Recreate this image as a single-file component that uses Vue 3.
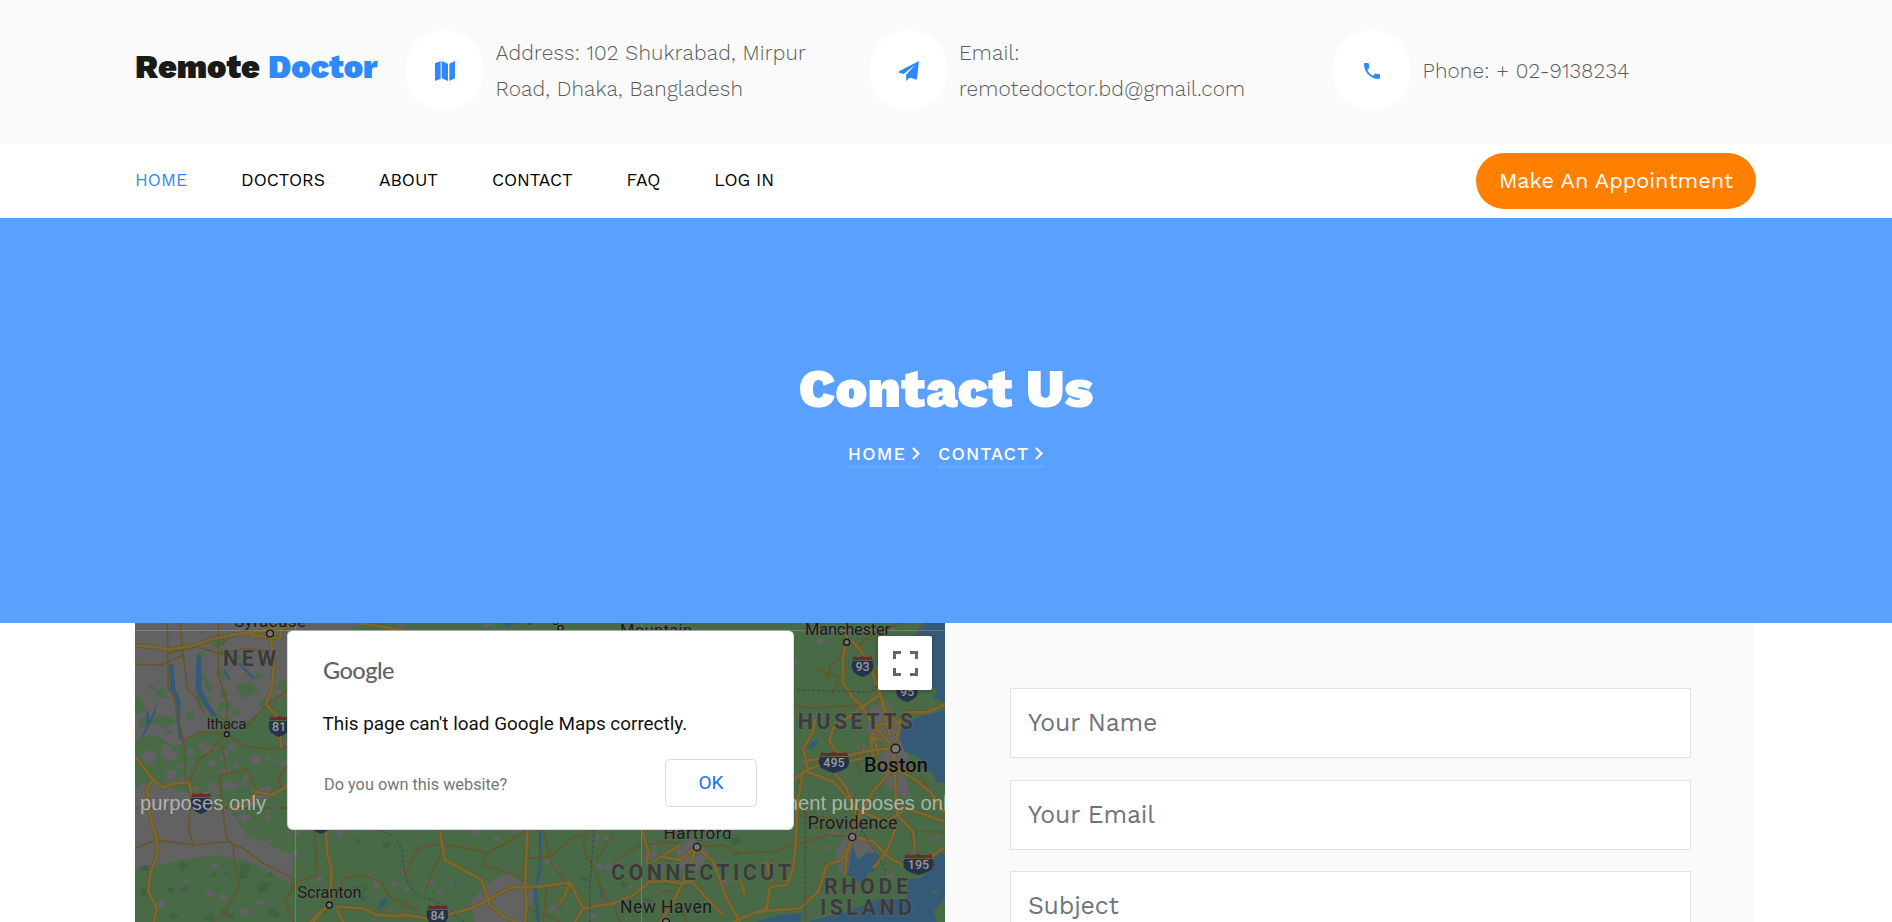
<script setup>
const contacts = [
  { icon: 'map', lines: ['Address: 102 Shukrabad, Mirpur', 'Road, Dhaka, Bangladesh'] },
  { icon: 'plane', lines: ['Email:', 'remotedoctor.bd@gmail.com'] },
  { icon: 'phone', lines: ['Phone: + 02-9138234'] },
]
const links = ['HOME', 'DOCTORS', 'ABOUT', 'CONTACT', 'FAQ', 'LOG IN']
const crumbs = ['HOME', 'CONTACT']
const fields = ['Your Name', 'Your Email', 'Subject']

// Deterministic land-cover patches for the map terrain
let seed = 11
const rnd = () => {
  seed = (seed * 16807) % 2147483647
  return seed / 2147483647
}
function patches(n, x, y, w, h, size) {
  let d = ''
  for (let i = 0; i < n; i++) {
    const cx = x + rnd() * w
    const cy = y + rnd() * h
    const r = size * (0.5 + rnd())
    const a0 = rnd() * 6.28
    const k = 3 + Math.floor(rnd() * 3)
    for (let j = 0; j < k; j++) {
      const a = a0 + (j * 6.28) / k
      const q = r * (0.4 + rnd() * 0.8)
      d += (j ? 'L' : 'M') + (cx + Math.cos(a) * q).toFixed(1) + ' ' + (cy + Math.sin(a) * q * 0.8).toFixed(1)
    }
    d += 'Z'
  }
  return d
}
const greenPatches = patches(34, 0, 55, 160, 75, 8) + patches(10, 60, 10, 100, 50, 5)
const greyPatches =
  patches(85, 0, 120, 165, 75, 6) + patches(22, 0, 200, 165, 95, 6) +
  patches(50, 165, 205, 370, 94, 5) + patches(65, 530, 0, 280, 260, 5) + patches(15, 165, 0, 370, 12, 6)
const darkPatches = patches(20, 10, 235, 140, 60, 6) + patches(10, 180, 215, 340, 80, 5) + patches(12, 545, 20, 100, 240, 5)

const shields = [
  { x: 144, y: 103, n: '81', w: 21 },
  { x: 66, y: 180, n: '', w: 21 },
  { x: 186, y: 200, n: '', w: 21 },
  { x: 302.5, y: 292, n: '84', w: 22 },
  { x: 727.5, y: 43, n: '93', w: 22 },
  { x: 772, y: 68, n: '95', w: 22 },
  { x: 699, y: 139, n: '495', w: 31 },
  { x: 783.5, y: 241, n: '195', w: 31 },
]
const major = {
  a: 'M15 91L60 95L120 103L180 94L240 75L300 60L380 50L480 35M420 24L425 90L432 150L425 220L408 270L440 300L455 400M15 425L70 495L100 518L135 505L178 503L185 540M70 495L50 520L60 600L80 670L82 720L62 770L55 830L80 880L72 921M290 580L345 575L380 530L425 540L480 510M588 645L592 720L605 760L600 860L550 921M605 870L570 890L540 921M620 880L640 921M620 875L700 880L740 900L840 905M500 24L455 40L450 70L410 65L360 60M690 24L840 50',
  b: 'M120 650L135 735L245 795L270 870L310 905L350 921M382 645L376 800L380 870L375 921M0 897L80 910L160 895L220 878L330 818L420 815L510 803L550 880L640 865L700 840L750 800L840 800M725 645L745 710L740 740L770 780M840 690L760 740M550 880L525 921M510 803L490 850L475 870',
  c: 'M560 24V80L548 130L550 205L580 250L605 272L640 330L700 395M575 75L605 110L640 180L660 240L680 290L720 330L705 390M650 150L658 220L672 290L690 360M855 268L800 292L740 292L715 325M720 320L650 330L632 370L640 430L690 470L760 460M400 495L440 465L500 440L560 422L640 405L705 400M660 240L600 280L520 340L508 380L530 410M445 465L430 400L460 350L465 310M430 470L412 560L408 680L400 760L380 810L330 815M430 440L480 430L520 465L560 520L590 600L578 665L560 720L555 780M690 470L640 530L600 600L578 665M703 400V470L712 600L760 650L765 710M703 460L760 490L810 530L855 595M440 470L520 500L600 590L680 620L740 580L855 620M578 665L640 680L690 730L740 755L800 735L855 695M710 630L680 710L640 760M220 921L290 890L420 880L475 830L500 750L545 735L575 675M110 695L60 735L0 725M110 695L160 740L200 850L240 921M110 695L70 800L40 860L0 921M330 815L320 880L290 895M0 795L60 805L95 800L150 860L190 900M655 420L650 395L635 360M665 375L625 365M530 410L560 440L610 430M240 790L255 840M320 740L335 800',
}
const minor = {
  a: 'M112 24L115 220L130 240L165 400L166 500M15 148L95 150L160 120L150 24M160 120L172 225L192 240L225 300M265 24V180L292 265L290 350M160 378L210 350L290 358L350 395L425 403L472 395M290 358L235 415L205 435L180 500M275 390L292 470M268 480L350 463L380 525M268 480L280 600L290 670L310 690L312 740L328 810L280 900L250 921M185 540L175 640L190 690L290 680L340 700L400 745L480 785L495 830M15 700L80 675L190 690M350 335L410 270L480 220M455 520L445 490L480 440M272 90L300 65M115 115L200 95L265 115L350 100L420 110M555 645L560 780L500 800L465 860L490 921M610 860L640 790L700 780L755 800L780 850L840 870',
  b: 'M15 780L55 700L130 685L260 715L385 645M130 690L75 830M260 715L250 750L380 790M385 730L450 725L530 660L560 665M560 645L550 700L590 780L620 860M640 655L590 735M250 720L330 680M450 740L550 870M430 645L450 730M640 740L720 690L840 680M0 870L60 885M380 880L440 900L480 921M640 870L660 921M430 921L440 815',
  c: 'M400 270L450 280L600 270M410 560L470 640L560 620M0 680L60 650M110 695L190 690L240 715L340 710L410 690L500 660L575 665M420 600L520 610L680 640M440 850L500 815M600 480L590 430L605 390M790 24L760 110M500 200L510 150L540 130L560 60M470 165L540 185L515 245M720 24L620 70L580 105M0 830L70 825M60 860L80 921M340 730L300 770M780 480L830 560M750 650L855 650M590 800L520 840',
}
const zones = [
  { id: 'a', t: 'translate(-5 -8) scale(.33333)' },
  { id: 'b', t: 'translate(265 -8) scale(.33333)' },
  { id: 'c', t: 'translate(525 -8) scale(.33333)' },
]
const towns = [
  { x: 135, y: 10.5, r: 3.4 }, { x: 91.8, y: 111.2, r: 2.4 }, { x: 194.3, y: 282, r: 3 },
  { x: 425.5, y: 5, r: 2.4 }, { x: 711.7, y: 19.3, r: 3 }, { x: 760.5, y: 125.7, r: 4.4 },
  { x: 717.3, y: 214, r: 3.6 }, { x: 562, y: 224, r: 3.6 }, { x: 531, y: 299, r: 3.4 },
]
</script>

<template>
  <div class="page">
    <header class="top">
      <div class="wrap top-row">
        <a class="logo">Remote <span>Doctor</span></a>
        <div v-for="c in contacts" :key="c.icon" class="contact">
          <div class="disc">
            <svg v-if="c.icon === 'map'" width="20" height="20" viewBox="0 0 60 60">
              <path d="M0 7L17 0V53L0 60ZM20 0L39 8V60L20 52ZM43 8L60 0V52L43 60Z" />
            </svg>
            <svg v-else-if="c.icon === 'plane'" width="20" height="20" viewBox="0 0 60 60">
              <path d="M60 0L0 31V35L14 39L47 13L21 42L22 60L31 51L36 50L51 56L54 54Z" />
            </svg>
            <svg v-else width="16" height="16" viewBox="3 3 18 18">
              <path d="M6.62 10.79c1.44 2.83 3.76 5.14 6.59 6.59l2.2-2.2c.27-.27.67-.36 1.02-.24 1.12.37 2.33.57 3.57.57.55 0 1 .45 1 1V20c0 .55-.45 1-1 1-9.39 0-17-7.61-17-17 0-.55.45-1 1-1h3.5c.55 0 1 .45 1 1 0 1.25.2 2.45.57 3.57.11.35.03.74-.25 1.02l-2.2 2.2z" />
            </svg>
          </div>
          <div class="lines">
            <div v-for="l in c.lines" :key="l">{{ l }}</div>
          </div>
        </div>
      </div>
    </header>

    <nav class="nav">
      <div class="wrap nav-row">
        <div class="links">
          <a v-for="(l, i) in links" :key="l" :class="{ active: i === 0 }">{{ l }}</a>
        </div>
        <a class="cta">Make An Appointment</a>
      </div>
    </nav>

    <section class="hero">
      <h1>Contact Us</h1>
      <div class="crumbs">
        <a v-for="c in crumbs" :key="c">
          <span>{{ c }}</span>
          <svg width="8" height="13" viewBox="0 0 8 13"><path d="M1 1L6.4 6.5L1 12" /></svg>
        </a>
      </div>
    </section>

    <main class="wrap split">
      <div class="map">
        <svg class="terrain" width="810" height="299" viewBox="0 0 810 299">
          <rect width="810" height="299" fill="#486a47" />
          <path class="grey" d="M0 0H165V60L140 82L120 92L100 108L80 104L62 112L40 124L22 112L0 116ZM0 165L50 168L70 184L95 188L112 212L158 232L156 262L120 240L85 232L50 236L20 243L0 246ZM165 0H230L210 8H165Z" />
          <path class="grey" d="M735 85L752 78L762 100L775 120L770 150L776 175L755 168L742 140L752 120L732 110ZM700 230L712 210L735 215L742 230L722 245L705 250ZM540 225L560 215L575 230L560 250L545 245ZM350 262L372 250L400 268L390 299H340L335 280Z" />
          <path fill="#486a47" d="M74 20L84 12L92 18L82 26ZM100 62L116 58L124 68L108 76ZM0 70L12 88L0 92ZM66 52L74 70L78 62Z" />
          <path :d="greenPatches" fill="#486a47" />
          <path :d="greyPatches" class="grey" />
          <path :d="darkPatches" fill="#416241" />

          <g :transform="zones[0].t" class="water">
            <path d="M118 145L130 150L136 220L152 255L150 330L157 378L148 372L138 310L136 265L120 225ZM203 110L215 135L214 220L235 265L260 300L250 306L225 275L196 225L198 160ZM82 258L74 300L38 370L35 366L50 328L49 290L56 288L56 320L70 292ZM282 158L300 190L298 198L284 178ZM326 140L375 188L372 194L328 152ZM745 885L750 860L772 846L770 862Z" />
          </g>
          <g :transform="zones[1].t" class="water">
            <path d="M417 645H425L424 760L410 820L420 921H410L400 825L418 760ZM598 805L608 830L606 860L600 840ZM308 24H345L325 40ZM162 810L167 780L168 805Z" />
          </g>
          <g :transform="zones[2].t" class="water">
            <path d="M855 286L790 302L745 318L722 345L720 375L735 410L775 425L790 460L815 470L830 500L855 505ZM765 60L788 24H855V262L820 250L832 225L815 210V64L780 85ZM578 690L592 735L622 712L650 716L655 745L640 775L625 770L612 815L580 785L562 780ZM855 712L825 725L820 760L780 790L745 792L740 850L650 855L560 890L440 921H855ZM285 921L360 900L425 895L420 921ZM445 390L470 376L474 386L450 402ZM750 655L770 652L768 680L755 672Z" />
            <path fill="#486a47" d="M820 890L855 850V921H830ZM810 835L838 820L830 832Z" />
          </g>

          <g v-for="z in zones" :key="z.id" :transform="z.t" class="roads">
            <path class="minor" :d="minor[z.id]" />
            <path class="casing" :d="major[z.id]" />
            <path class="major" :d="major[z.id]" />
          </g>

          <path class="border" d="M0 185H152M240 207Q268 210 268 240Q272 270 290 275Q310 280 320 292L330 299M459 207L455 260L455 299M662 67L735 69L745 62M670 183V299M722 183V200L750 245V260" />
          <path class="tile" d="M0 7.5H810M160.5 0V299M506.5 0V299" />

          <g v-for="s in shields" :key="s.x" :transform="`translate(${s.x} ${s.y})`">
            <g :transform="`scale(${s.w / 22} 1)`">
              <path d="M-10 -5H10Q12 1 9 6Q5 9.500 0 11Q-5 9.500 -9 6Q-12 1 -10 -5Z" fill="#25324b" />
              <path d="M-9 -10Q-5 -7.500 0 -10Q5 -7.500 9 -10L10 -6H-10Z" fill="#6a2b2b" />
            </g>
            <text y="5" class="num">{{ s.n }}</text>
          </g>

          <circle v-for="t in towns" :key="t.x" :cx="t.x" :cy="t.y" :r="t.r" class="town" />

          <g class="label">
            <text x="135" y="3.500" font-size="17" textLength="72">Syracuse</text>
            <text x="91.500" y="105.500" font-size="15.300" textLength="40">Ithaca</text>
            <text x="194.500" y="275" font-size="16.300" textLength="64">Scranton</text>
            <text x="418" y="-1" font-size="14">Springfield</text>
            <text x="521" y="12.500" font-size="16.500" textLength="72">Mountain</text>
            <text x="712.500" y="12" font-size="16.500" textLength="85">Manchester</text>
            <text x="562.500" y="215.500" font-size="17" textLength="68">Hartford</text>
            <text x="531" y="289.500" font-size="17.500" textLength="92">New Haven</text>
            <text x="717.500" y="205.500" font-size="18" textLength="90">Providence</text>
            <text x="761" y="148.500" font-size="20" textLength="64" class="city">Boston</text>
          </g>
          <g class="state">
            <text x="114.500" y="42.500" font-size="21.500" textLength="53">NEW</text>
            <text x="778" y="106" font-size="21.500" textLength="224" class="end">MASSACHUSETTS</text>
            <text x="566" y="257" font-size="21.500" textLength="180">CONNECTICUT</text>
            <text x="731" y="271" font-size="21.500" textLength="84">RHODE</text>
            <text x="731" y="292" font-size="21.500" textLength="92">ISLAND</text>
          </g>
          <g class="mark">
            <text x="5" y="187" textLength="126">purposes only</text>
            <text x="691" y="187" class="right">development</text>
            <text x="696.500" y="187" textLength="126">purposes only</text>
          </g>
        </svg>

        <div class="dialog">
          <div class="brand">Google</div>
          <p class="msg">This page can't load Google Maps correctly.</p>
          <div class="foot">
            <a>Do you own this website?</a>
            <button>OK</button>
          </div>
        </div>
        <div class="full">
          <svg width="25" height="25" viewBox="0 0 25 25"><path d="M1.500 8V1.500H8M17 1.500H23.500V8M23.500 17V23.500H17M8 23.500H1.500V17" /></svg>
        </div>
      </div>
      <form class="form">
        <input v-for="f in fields" :key="f" type="text" :placeholder="f" />
      </form>
    </main>
  </div>
</template>

<style>
body { overflow: hidden; }
</style>

<style scoped>
.page { height: 922px; overflow: hidden; background: #fff; font-family: "Work Sans", Inter, sans-serif; }
.page * { box-sizing: border-box; }
.wrap { width: 1620px; margin: 0 auto; }
.top { height: 144px; background: #fafafa; }
.top-row { display: flex; padding-top: 30px; margin-left: 135px; }
.logo { width: 270px; flex: none; font-size: 32.500px; line-height: 38px; padding-top: 18px; font-weight: 900; color: #1a1a1a; white-space: nowrap; letter-spacing: -.03px; }
.logo span { color: #2f89fc; }
.contact { width: 463.500px; flex: none; display: flex; align-items: center; height: 81px; }
.disc { width: 79px; height: 81px; border-radius: 50%; background: #fff; display: flex; align-items: center; justify-content: center; }
.disc svg { fill: #2f89fc; display: block; margin-left: 1px; margin-top: 1px; }
.lines { margin-left: 11.500px; padding-top: 1px; font-size: 20.800px; line-height: 36px; font-weight: 350; letter-spacing: .18px; color: #5a5a5a; white-space: nowrap; }
.nav { height: 74px; background: #fff; }
.nav-row { display: flex; justify-content: space-between; align-items: center; height: 74px; margin-left: 135px; }
.links { display: flex; gap: 54px; font-size: 17.500px; color: #000; padding-bottom: 3px; }
.links .active { color: #2f89fc; }
.cta { width: 280px; height: 56px; margin-right: -1px; border-radius: 28px; background: #ff8000; color: #fff; font-size: 21.700px; line-height: 55px; text-align: center; }
.hero { height: 405px; background: #5aa0ff; display: flex; flex-direction: column; align-items: center; color: #fff; }
h1 { margin: 139px 0 0; font-size: 54px; line-height: 64px; font-weight: 900; white-space: nowrap; }
.crumbs { display: flex; gap: 18px; margin-top: 22px; font-size: 18px; line-height: 26px; font-weight: 500; letter-spacing: 1.100px; margin-right: 1px; }
.crumbs a { display: flex; align-items: center; gap: 6px; border-bottom: 3px solid rgba(255,255,255,.1); height: 25px; }
.crumbs svg { fill: none; stroke: #fff; stroke-width: 2.200; display: block; margin-bottom: 1px; }
.split { display: grid; grid-template-columns: 810px 810px; margin-left: 135px; }
.map { position: relative; height: 299px; overflow: hidden; }
.terrain { display: block; }
.grey { fill: #626262; }
.water { fill: #345a78; }
.roads path { fill: none; stroke-linejoin: round; }
.roads .minor { stroke: #6a5326; stroke-width: 4.500; }
.roads .casing { stroke: #62552d; stroke-width: 12; }
.roads .major { stroke: #7b682f; stroke-width: 8.500; }
.border { fill: none; stroke: #3f4440; stroke-width: 1; stroke-dasharray: 3 2; }
.tile { fill: none; stroke: rgba(255,255,255,.18); stroke-width: 1; }
.num { fill: #9a9a9a; font: 500 12.500px Roboto, sans-serif; text-anchor: middle; }
.town { fill: #777; stroke: #171717; stroke-width: 1.400; }
.label text { font-family: Roboto, sans-serif; text-anchor: middle; fill: #1b1b1b; stroke: rgba(110,110,110,.35); stroke-width: 2; paint-order: stroke; }
.label .city { font-weight: 500; fill: #101010; }
.state text { font-family: Roboto, sans-serif; font-weight: 700; text-anchor: middle; fill: #3b3b3b; stroke: rgba(110,110,110,.4); stroke-width: 2; paint-order: stroke; }
.state .end { text-anchor: end; }
.mark text { font: 20.200px "Liberation Sans", Arial, sans-serif; fill: rgba(220,220,220,.68); }
.mark .right { text-anchor: end; }
.dialog { position: absolute; left: 152px; top: 7px; width: 507px; height: 200px; border-radius: 6px; background: #fff; padding: 23px 36px 20px 34px; font-family: Roboto, sans-serif; border: 1px solid #d8d8d8; border-top-color: #aaa; display: flex; flex-direction: column; }
.brand { font: 500 23.500px/32px Lato, sans-serif; color: #5f6368; letter-spacing: -.5px; padding-left: 1px; }
.msg { margin: 26px 0 0; padding-left: .5px; font-size: 18.900px; line-height: 24px; font-weight: 450; color: #111; white-space: nowrap; }
.foot { display: flex; justify-content: space-between; align-items: center; margin-top: 23px; height: 48px; padding-left: 2px; font-size: 16.300px; color: #757575; }
.foot a { padding-top: 2px; }
.foot button { width: 92px; height: 48px; background: #fff; border: 1px solid #dadce0; border-radius: 5px; color: #1a73e8; font: 19px Roboto, sans-serif; padding: 0 0 2px; }
.full { position: absolute; left: 743px; top: 13px; width: 54px; height: 54px; background: #fff; border-radius: 2px; box-shadow: 0 1px 4px rgba(0,0,0,.3); display: flex; align-items: center; justify-content: center; }
.full svg { fill: none; stroke: #666; stroke-width: 3; display: block; }
.form { height: 299px; background: #fafafa; padding: 65px 64.500px 0 65px; display: flex; flex-direction: column; gap: 21.700px; overflow: hidden; }
input { flex: none; width: 100%; height: 70px; border: 1px solid #e3e3e3; background: #fff; padding: 0 17px 1px; font: 380 24.800px "Work Sans", Inter, sans-serif; letter-spacing: -.15px; outline: none; }
input::placeholder { color: #6c757d; opacity: 1; }
</style>
